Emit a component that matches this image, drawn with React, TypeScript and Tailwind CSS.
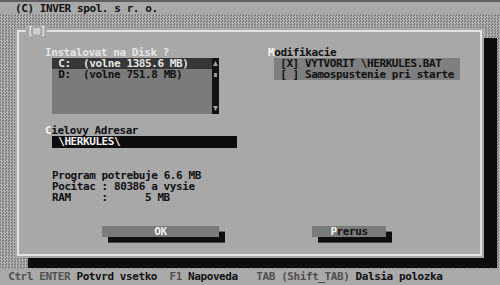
export default function App() {
  return (
    <div className="w-[500px] h-[285px] overflow-hidden flex flex-col font-['DejaVu_Sans_Mono',monospace] font-bold text-[11px] tracking-[-0.42px] leading-[11.2px] text-[#111] whitespace-pre">
      {/* top bar */}
      <div className="h-[14px] shrink-0 bg-[#a9a9a9] border-t-2 border-[#5e5e5e] pl-[15px] pt-[1px]">
        {"(C) INVER spol. s r. o."}
      </div>

      {/* desktop */}
      <div className="flex-1 bg-[image:repeating-conic-gradient(#b2b2b2_0%_25%,#808080_0%_50%)] bg-[length:3px_3px] pl-[15px] pt-[14px]">
        <div className="relative w-[469px] h-[230px] bg-[#a8a8a8] p-[2px] shadow-[13px_10px_0_#0d0d0d]">
          <div className="h-full border-2 border-[#e2e2e2] pt-[14.8px] flex flex-col">
            {/* upper section */}
            <div className="flex">
              <div className="w-[249px] pl-[26px] flex flex-col">
                <div className="h-[11.2px] text-[#e4e4e4]">{"Instalovat na Disk ?"}</div>
                <div className="ml-[7px] w-[167px] h-[56px] bg-[#7b7b7b] flex">
                  <div className="flex-1 flex flex-col">
                    <div className="h-[11.2px] bg-[#363636] text-[#e6e6e6]">{" C:  (volne 1385.6 MB)"}</div>
                    <div className="h-[11.2px]">{" D:  (volne 751.8 MB)"}</div>
                  </div>
                  <div className="w-[7px] bg-[#121212] flex flex-col items-center">
                    <div className="h-[11.2px] flex items-center justify-center">
                      <svg width="5" height="5" viewBox="0 0 5 5"><path d="M2.5 0L5 5H0z" fill="#a2a2a2" /></svg>
                    </div>
                    <div className="h-[11.2px] flex items-center justify-center">
                      <div className="w-[3px] h-[4px] bg-[#9a9a9a]" />
                    </div>
                    <div className="h-[22.4px]" />
                    <div className="h-[11.2px] flex items-center justify-center">
                      <svg width="5" height="5" viewBox="0 0 5 5"><path d="M0 0H5L2.5 5z" fill="#a2a2a2" /></svg>
                    </div>
                  </div>
                </div>
              </div>
              <div className="flex flex-col">
                <div className="h-[11.2px]"><span className="text-[#f4f4f4]">M</span>{"odifikacie"}</div>
                <div className="ml-[6px] w-[186px] h-[22.4px] bg-[#7f7f7f] flex flex-col">
                  <div className="h-[11.2px]">{" [X] VYTVORIT \\HERKULES.BAT"}</div>
                  <div className="h-[11.2px]">{" [ ] Samospustenie pri starte"}</div>
                </div>
              </div>
            </div>

            {/* target directory */}
            <div className="mt-[11.2px] pl-[26px] flex flex-col">
              <div className="h-[11.2px]"><span className="text-[#f4f4f4]">C</span>{"ielovy Adresar"}</div>
              <div className="ml-[7px] w-[185px] h-[11.2px] bg-[#0c0c0c] text-[#f2f2f2]">{" \\HERKULES\\"}</div>
            </div>

            {/* info */}
            <div className="mt-[22.4px] pl-[33px] flex flex-col">
              <div className="h-[11.2px]">{"Program potrebuje 6.6 MB"}</div>
              <div className="h-[11.2px] flex">
                <span className="w-[49.6px] shrink-0">{"Pocitac"}</span>
                <span>{": 80386 a vysie"}</span>
              </div>
              <div className="h-[11.2px] flex">
                <span className="w-[49.6px] shrink-0">{"RAM"}</span>
                <span className="w-[43.4px] shrink-0">{":"}</span>
                <span>{"5 MB"}</span>
              </div>
            </div>

            {/* buttons */}
            <div className="mt-[22.4px] pl-[83px] flex gap-[93px]">
              <div className="w-[117px] h-[11.2px] bg-[#7a7a7a] shadow-[6px_5.6px_0_#0d0d0d] text-center text-[#f0f0f0]">{"OK"}</div>
              <div className="w-[74px] h-[11.2px] bg-[#7a7a7a] shadow-[6px_5.6px_0_#0d0d0d] text-center">
                <span className="text-[#f4f4f4]">P</span>{"rerus"}
              </div>
            </div>
          </div>

          {/* window close box over frame */}
          <div className="absolute left-[11px] top-[-3px] px-[1px] bg-[#a8a8a8] text-[#f0f0f0] font-normal">
            {"["}<span className="text-[#cfcfcf]">{"■"}</span>{"]"}
          </div>
        </div>
      </div>

      {/* status bar */}
      <div className="h-[16px] shrink-0 bg-[#a9a9a9] pl-[2px] pt-[2px]">
        <span>{" "}</span>
        <span className="text-[#505050]">{"Ctrl ENTER"}</span>
        <span>{" Potvrd vsetko  "}</span>
        <span className="text-[#505050]">{"F1"}</span>
        <span>{" Napoveda   "}</span>
        <span className="text-[#505050]">{"TAB (Shift_TAB)"}</span>
        <span>{" Dalsia polozka"}</span>
      </div>
    </div>
  );
}
